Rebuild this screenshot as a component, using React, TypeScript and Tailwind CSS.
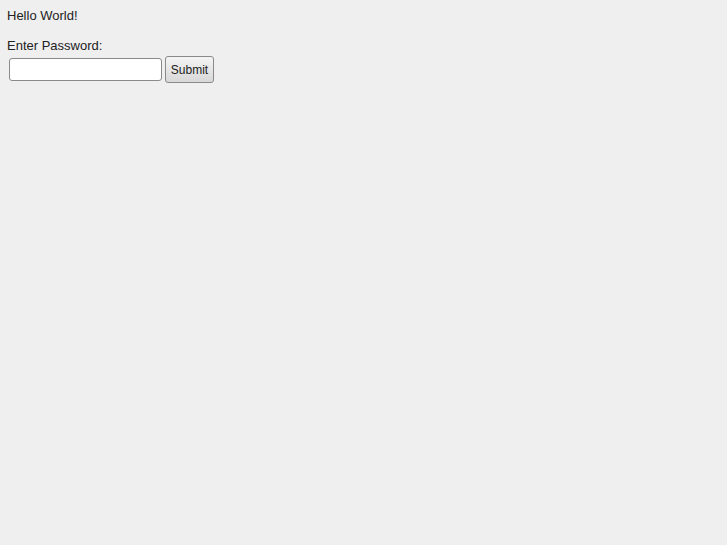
export default function App() {
  return (
    <div className="min-h-[545px] bg-[#efefef] px-[7px] pt-[8px] font-['Liberation_Sans',Arial,sans-serif] text-[13px] text-[#222]">
      <p className="leading-[15px]">Hello World!</p>
      <p className="mt-[15px] leading-[15px]">Enter Password:</p>
      <div className="mt-[3px] flex items-center gap-[3px] pl-[2px]">
        <input
          type="password"
          className="h-[23px] w-[153px] rounded-[3px] border border-[#8a8a8a] bg-white px-1 text-[13px] outline-none"
        />
        <button
          type="button"
          className="h-[27px] w-[49px] rounded-[3px] border border-[#8a8a8a] bg-gradient-to-b from-[#f4f4f4] to-[#d8d8d8] text-[12px] text-[#222]"
        >
          Submit
        </button>
      </div>
    </div>
  );
}
